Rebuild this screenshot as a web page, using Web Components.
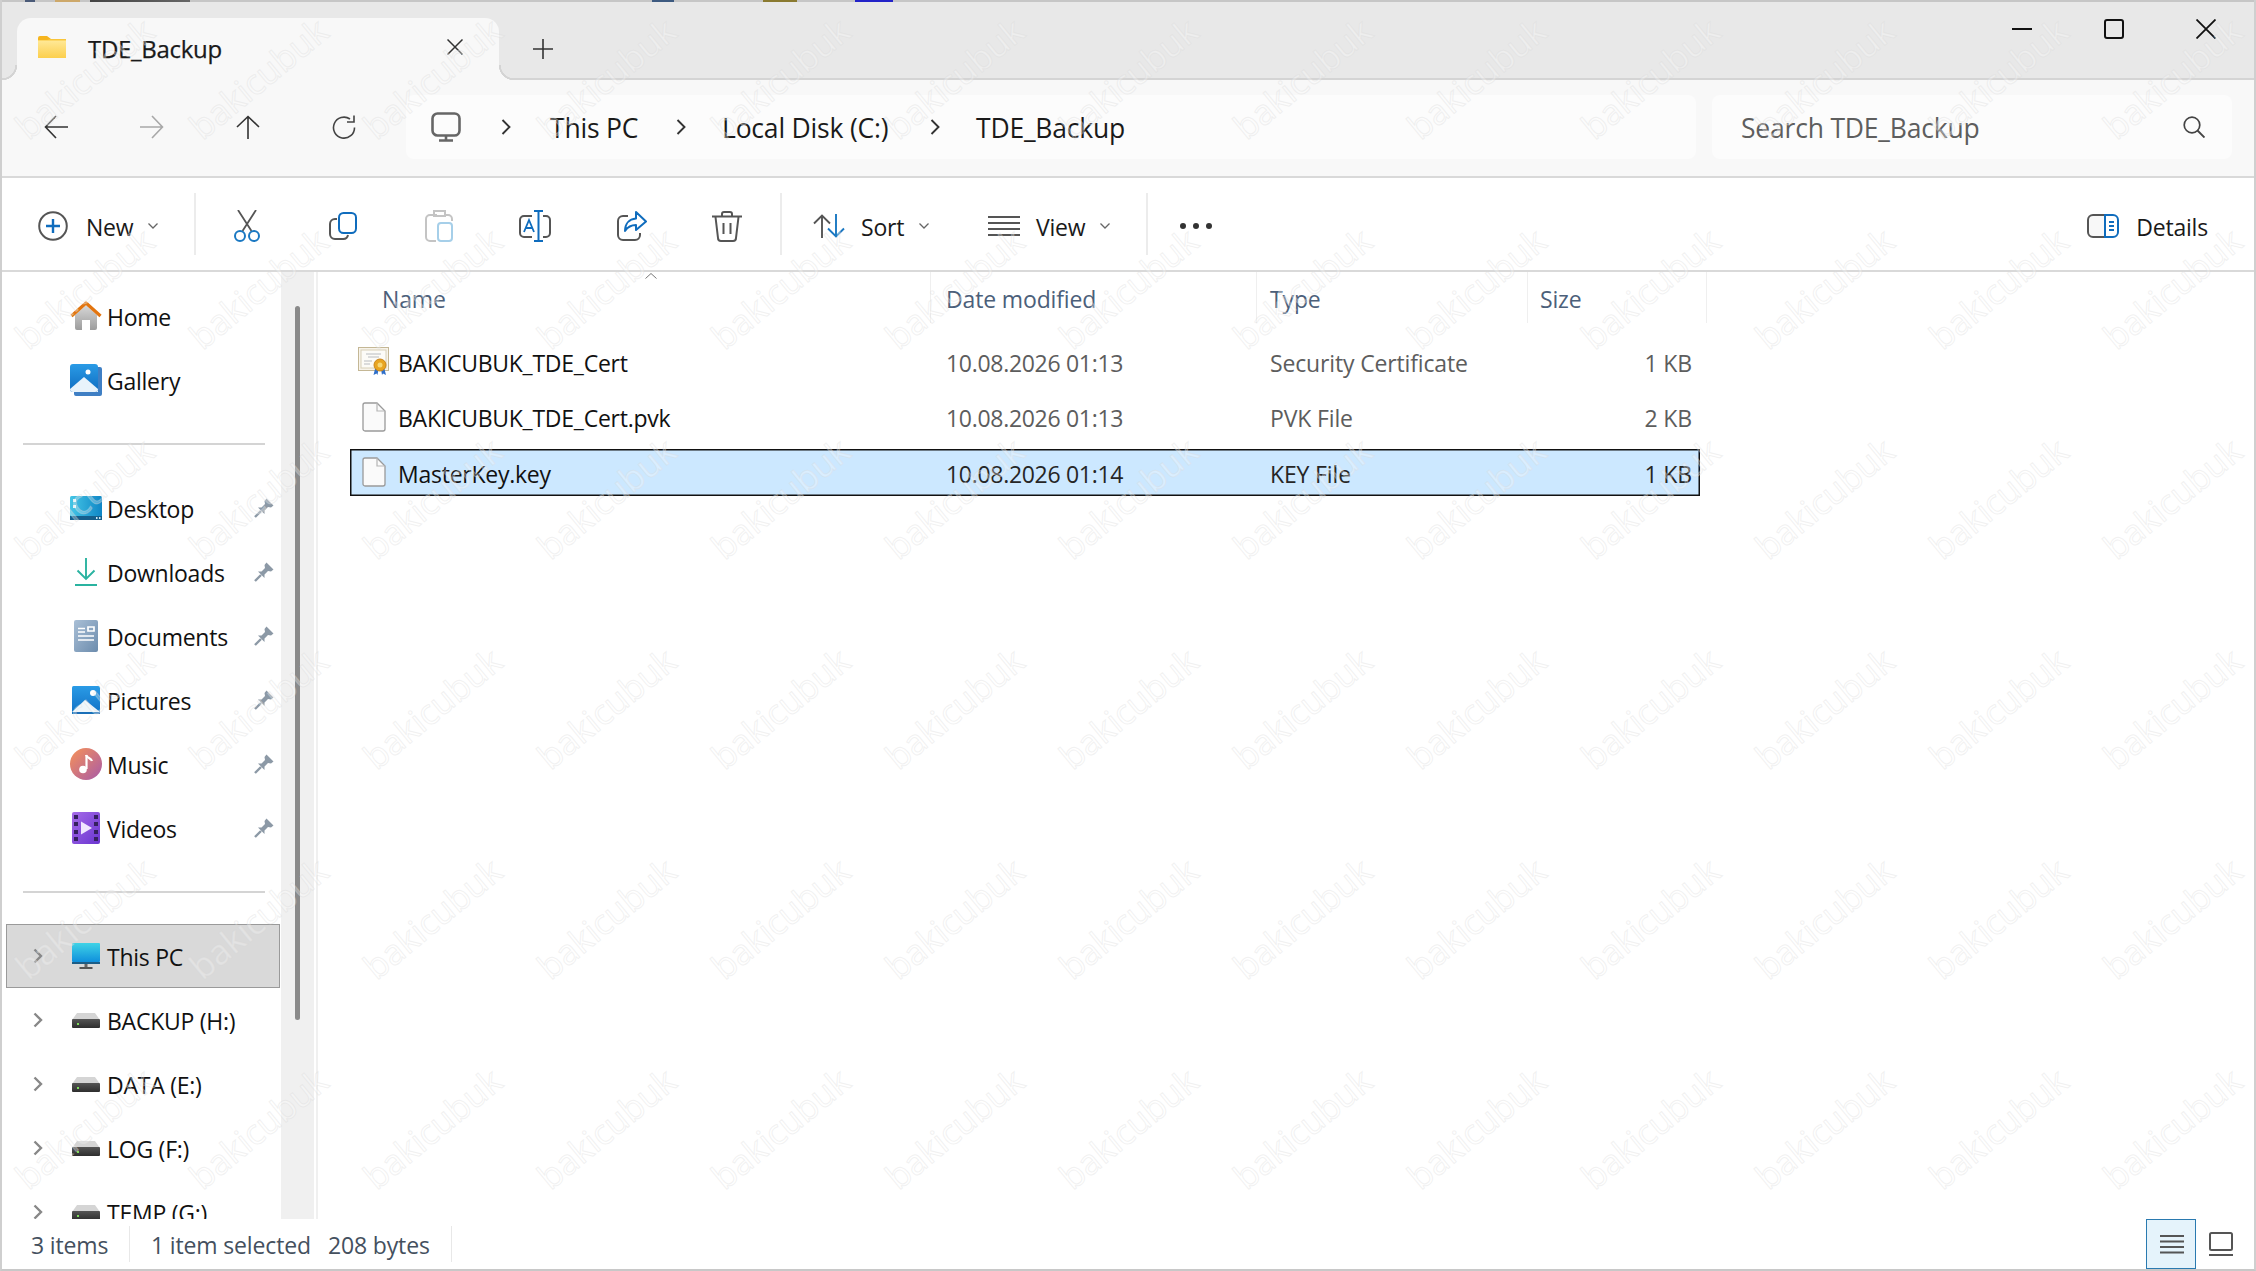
<!DOCTYPE html>
<html lang="en">
<head>
<meta charset="utf-8">
<title>TDE_Backup</title>
<style>
  html, body { margin: 0; padding: 0; background: #fff; }
  body { font-family: "Open Sans", "Noto Sans", sans-serif; color: #111; overflow: hidden; }
</style>
</head>
<body>
<explorer-window>
  <title-bar slot="top" label="TDE_Backup"></title-bar>
  <address-bar slot="top"></address-bar>
  <command-bar slot="top"></command-bar>

  <nav-pane slot="nav">
    <nav-item icon="home">Home</nav-item>
    <nav-item icon="gallery">Gallery</nav-item>
    <nav-sep></nav-sep>
    <nav-item icon="desktop" pinned>Desktop</nav-item>
    <nav-item icon="downloads" pinned>Downloads</nav-item>
    <nav-item icon="documents" pinned>Documents</nav-item>
    <nav-item icon="pictures" pinned>Pictures</nav-item>
    <nav-item icon="music" pinned>Music</nav-item>
    <nav-item icon="videos" pinned>Videos</nav-item>
    <nav-sep></nav-sep>
    <nav-item icon="thispc" expand selected>This PC</nav-item>
    <nav-item icon="drive" expand>BACKUP (H:)</nav-item>
    <nav-item icon="drive" expand>DATA (E:)</nav-item>
    <nav-item icon="drive" expand>LOG (F:)</nav-item>
    <nav-item icon="drive" expand>TEMP (G:)</nav-item>
  </nav-pane>

  <file-list slot="main">
    <file-row icon="cert" name="BAKICUBUK_TDE_Cert" date="10.08.2026 01:13" type="Security Certificate" size="1 KB"></file-row>
    <file-row icon="doc" name="BAKICUBUK_TDE_Cert.pvk" date="10.08.2026 01:13" type="PVK File" size="2 KB"></file-row>
    <file-row icon="doc" name="MasterKey.key" date="10.08.2026 01:14" type="KEY File" size="1 KB" selected></file-row>
  </file-list>

  <status-bar slot="bottom"></status-bar>
  <water-mark slot="over"></water-mark>
</explorer-window>

<script>
const ICONS = {
  folder: [28, 22, `<defs><linearGradient id="g" x1="0" y1="0" x2="0" y2="1"><stop offset="0" stop-color="#ffe999"/><stop offset="1" stop-color="#fccf4d"/></linearGradient></defs>
    <path d="M0 2a2 2 0 0 1 2-2h7l4 3h15v5H0z" fill="#f6b51e"/><rect y="4" width="28" height="18" fill="url(#g)"/><path d="M0 4h9l3-1h16v1.500H0z" fill="#f9c53a"/>`],
  home: [32, 30, `<defs><linearGradient id="g" x1="0" y1="0" x2="0" y2="1"><stop offset="0" stop-color="#d8d8d8"/><stop offset="1" stop-color="#9c9c9c"/></linearGradient></defs>
    <path d="M5 14 16 4l11 10v13a2 2 0 0 1-2 2h-5V19h-8v10H7a2 2 0 0 1-2-2z" fill="url(#g)"/><path d="M1.500 15 16 2l14.500 13" fill="none" stroke="#e2740f" stroke-width="3.200" stroke-linejoin="round"/>`],
  gallery: [32, 32, `<defs><linearGradient id="g" x1="0" y1="0" x2="0" y2="1"><stop offset="0" stop-color="#2a9be6"/><stop offset="1" stop-color="#0f6cc0"/></linearGradient></defs>
    <path d="M28 3h2a2 2 0 0 1 2 2v25a2 2 0 0 1-2 2H6a2 2 0 0 1-2-2v-2h24z" fill="#3f7fc4"/><rect width="28" height="28" rx="3" fill="url(#g)"/>
    <path d="M0 25 14 13l14 12v0a3 3 0 0 1-3 3H3a3 3 0 0 1-3-3z" fill="#e8f3fb"/><circle cx="18" cy="8" r="2.500" fill="#fff"/>`],
  desktop: [32, 24, `<defs><linearGradient id="g" x1="0" y1="0" x2="1" y2="0"><stop offset="0" stop-color="#45c6e6"/><stop offset="1" stop-color="#0f86c6"/></linearGradient></defs>
    <rect width="32" height="24" rx="1.500" fill="url(#g)"/><rect y="20" width="32" height="4" fill="#155f8c"/><rect x="3" y="3" width="3" height="3" fill="#e8f8fc"/><rect x="3" y="9" width="3" height="3" fill="#e8f8fc"/><rect x="26" y="21" width="1.500" height="2" fill="#cfeaf5"/><rect x="29" y="21" width="1.500" height="2" fill="#cfeaf5"/>`],
  downloads: [22, 28, `<path d="M11 0v21M2.500 12.500 11 21l8.500-8.500M0 27h22" fill="none" stroke="#2ab3a0" stroke-width="1.900"/>`],
  documents: [24, 32, `<defs><linearGradient id="g" x1="0" y1="0" x2="1" y2="1"><stop offset="0" stop-color="#a9bfd6"/><stop offset="1" stop-color="#6c8cad"/></linearGradient></defs>
    <rect width="24" height="32" rx="2" fill="url(#g)"/><path d="M4 8.500h7M14 7h6v4h-6zM4 12h7M4 16h16M4 20h16" fill="none" stroke="#fff" stroke-width="1.700"/>`],
  pictures: [28, 28, `<defs><linearGradient id="g" x1="0" y1="0" x2="0" y2="1"><stop offset="0" stop-color="#2a9be6"/><stop offset="1" stop-color="#1170c4"/></linearGradient></defs>
    <rect width="28" height="28" rx="1.500" fill="url(#g)"/><path d="M0 26 13 14l15 12z" fill="#eef6fb"/><circle cx="21" cy="7" r="3" fill="#fff"/><rect y="26" width="28" height="2" fill="#1a6fb8"/>`],
  music: [32, 32, `<defs><linearGradient id="g" x1="0" y1="0" x2="1" y2="1"><stop offset="0" stop-color="#f79257"/><stop offset="1" stop-color="#a85aa8"/></linearGradient></defs>
    <circle cx="16" cy="16" r="16" fill="url(#g)"/><path d="M16.500 7v14" stroke="#fff" stroke-width="2.200"/><path d="M16 7c1 3 5 3 6 6" fill="none" stroke="#fff" stroke-width="2.200"/><circle cx="13" cy="21.500" r="3.800" fill="#fff"/>`],
  videos: [28, 32, `<defs><linearGradient id="g" x1="0" y1="0" x2="1" y2="1"><stop offset="0" stop-color="#a56be8"/><stop offset="1" stop-color="#6a35d0"/></linearGradient></defs>
    <rect width="28" height="32" rx="2" fill="url(#g)"/><g fill="#35205f"><rect x="2" y="3" width="4" height="4"/><rect x="2" y="10" width="4" height="4"/><rect x="2" y="18" width="4" height="4"/><rect x="2" y="25" width="4" height="4"/><rect x="22" y="3" width="4" height="4"/><rect x="22" y="10" width="4" height="4"/><rect x="22" y="18" width="4" height="4"/><rect x="22" y="25" width="4" height="4"/></g><path d="M9 9.500 20 16 9 22.500z" fill="#f0e8ff"/>`],
  thispc: [28, 26, `<defs><linearGradient id="g" x1="0" y1="0" x2="0" y2="1"><stop offset="0" stop-color="#3fd3e6"/><stop offset="1" stop-color="#0f8fdc"/></linearGradient></defs>
    <rect width="28" height="19" rx="1" fill="url(#g)"/><rect y="19" width="28" height="2" fill="#1c5d86"/><rect x="12.500" y="21" width="3" height="3" fill="#666"/><rect x="7.500" y="24" width="13" height="2" fill="#555"/>`],
  drive: [28, 15, `<defs><linearGradient id="g" x1="0" y1="0" x2="0" y2="1"><stop offset="0" stop-color="#555"/><stop offset="1" stop-color="#2e2e2e"/></linearGradient></defs>
    <path d="M0 7 5 0h18l5 7z" fill="#d5d5d5"/><rect y="6" width="28" height="9" rx="1" fill="url(#g)"/><rect x="5" y="10" width="2" height="2" fill="#7cdc5a"/>`],
  pin: [20, 20, `<path d="M12.500.5l7 7L17 9.500 14 9l-3.500 3.500V16L4 9.500h3.500L11 6l-.5-3z" fill="#8c99a6"/><path d="M7 13l-6 6" stroke="#8c99a6" stroke-width="2.400"/>`],
  navchev: [10, 16, `<path d="M1.500 1.500 8 8l-6.500 6.500" fill="none" stroke="#888" stroke-width="2.400"/>`],
  crumb: [10, 16, `<path d="M1.500 1 8.500 8l-7 7" fill="none" stroke="#333" stroke-width="1.900"/>`],
  monitor: [30, 30, `<rect x="1.500" y="1.500" width="27" height="22" rx="5" fill="none" stroke="#666" stroke-width="2.600"/><path d="M15 24v4M8 28.500h14" fill="none" stroke="#666" stroke-width="2.600"/>`],
  back: [24, 24, `<path d="M24 12H1.500M12 1 1.500 12 12 23" fill="none" stroke="#333" stroke-width="1.600"/>`],
  forward: [24, 24, `<path d="M0 12h22.500M12 1l10.500 11L12 23" fill="none" stroke="#a8a8a8" stroke-width="1.600"/>`],
  up: [24, 24, `<path d="M12 24V1.500M1 12 12 1.500 23 12" fill="none" stroke="#333" stroke-width="1.600"/>`],
  refresh: [24, 24, `<path d="M18 4A10.500 10.500 0 1 0 22.500 12.500" fill="none" stroke="#444" stroke-width="1.600"/><path d="M22 .5V7h-7" fill="none" stroke="#444" stroke-width="1.600"/>`],
  search: [22, 22, `<circle cx="9" cy="9" r="7.800" fill="none" stroke="#444" stroke-width="1.700"/><path d="M14.500 14.500l7 7" stroke="#444" stroke-width="1.900"/>`],
  tabx: [16, 16, `<path d="M.5.500l15 15M15.500.500l-15 15" stroke="#333" stroke-width="1.500"/>`],
  plus: [20, 20, `<path d="M10 0v20M0 10h20" stroke="#333" stroke-width="1.600"/>`],
  winmin: [20, 20, `<path d="M0 10h20" stroke="#111" stroke-width="2"/>`],
  winmax: [20, 20, `<rect x="1" y="1" width="18" height="18" rx="2" fill="none" stroke="#111" stroke-width="2"/>`],
  winclose: [20, 20, `<path d="M.5.500l19 19M19.500.500l-19 19" stroke="#111" stroke-width="1.800"/>`],
  new: [30, 30, `<circle cx="15" cy="15" r="13.800" fill="none" stroke="#555" stroke-width="2"/><path d="M15 8v14M8 15h14" stroke="#0f6cbd" stroke-width="2.400"/>`],
  cut: [28, 32, `<path d="M5 0 18.500 21M23 0 9.500 21" stroke="#555" stroke-width="1.800"/><circle cx="7" cy="26" r="5" fill="none" stroke="#1a78c2" stroke-width="2"/><circle cx="21" cy="26" r="5" fill="none" stroke="#1a78c2" stroke-width="2"/>`],
  copy: [28, 28, `<rect x="10" y="1" width="17" height="20" rx="4.500" fill="none" stroke="#0f6cbd" stroke-width="2"/><path d="M8 7H6a5 5 0 0 0-5 5v10a5 5 0 0 0 5 5h8a5 5 0 0 0 5-4" fill="none" stroke="#555" stroke-width="2"/>`],
  paste: [28, 32, `<path d="M12 5H5a4 4 0 0 0-4 4v18a4 4 0 0 0 4 4h6M21 5h2a4 4 0 0 1 4 4v2M9 1h11v5H9z" fill="none" stroke="#c4c4c4" stroke-width="2"/><rect x="13" y="13" width="14" height="18" rx="3" fill="none" stroke="#a6cfe9" stroke-width="2"/>`],
  rename: [32, 32, `<path d="M13 6H5a4 4 0 0 0-4 4v13a4 4 0 0 0 4 4h8M24 6h3a4 4 0 0 1 4 4v13a4 4 0 0 1-4 4h-3" fill="none" stroke="#555" stroke-width="2"/><path d="M15 1h9M19.500 1v30M15 31h9" stroke="#0f6cbd" stroke-width="2"/><path d="M5 22 10 10l5 12M7 18h6" fill="none" stroke="#0f6cbd" stroke-width="1.800"/>`],
  share: [30, 30, `<path d="M11 5H6a5 5 0 0 0-5 5v14a5 5 0 0 0 5 5h12a5 5 0 0 0 5-5v-2" fill="none" stroke="#555" stroke-width="2"/><path d="M19 1l10 9.500L19 19v-5c-5 0-8 1.500-11 6 0-7 4-12 11-12.500z" fill="none" stroke="#0f6cbd" stroke-width="2" stroke-linejoin="round"/>`],
  del: [30, 31, `<path d="M0 5.500h30M10 5V3a2 2 0 0 1 2-2h6a2 2 0 0 1 2 2v2M3.500 6l2.500 21a3 3 0 0 0 3 3h12a3 3 0 0 0 3-3l2.500-21M11.500 12v11M18.500 12v11" fill="none" stroke="#555" stroke-width="2"/>`],
  sort: [32, 24, `<path d="M9 24V1.500M1 9.500l8-8 8 8" fill="none" stroke="#555" stroke-width="1.900"/><path d="M23 0v22.500M15 14.500l8 8 8-8" fill="none" stroke="#1a78c2" stroke-width="1.900"/>`],
  view: [32, 20, `<path d="M0 1h32M0 7h32M0 13h32M0 19h32" stroke="#555" stroke-width="1.800"/>`],
  dots: [32, 6, `<circle cx="3" cy="3" r="3" fill="#333"/><circle cx="16" cy="3" r="3" fill="#333"/><circle cx="29" cy="3" r="3" fill="#333"/>`],
  details: [32, 24, `<path d="M18 1H6a5 5 0 0 0-5 5v12a5 5 0 0 0 5 5h12" fill="#f8f8f8" stroke="#555" stroke-width="2"/><path d="M18 1h8a5 5 0 0 1 5 5v12a5 5 0 0 1-5 5h-8z" fill="none" stroke="#0f6cbd" stroke-width="2"/><path d="M22 8h5M22 12h5M22 16h5" stroke="#0f6cbd" stroke-width="1.800"/>`],
  chevdown: [10, 6, `<path d="M.5.500 5 5l4.500-4.500" fill="none" stroke="#666" stroke-width="1.300"/>`],
  caret: [12, 6, `<path d="M.5 5.500 6 .5l5.500 5" fill="none" stroke="#777" stroke-width="1"/>`],
  cert: [32, 28, `<rect x=".5" y=".5" width="30" height="23" fill="#f7f3ea" stroke="#c4b795"/><rect x="3" y="3" width="25" height="18" fill="#fcfbf7" stroke="#d8d0b8"/><path d="M8 7h15M10 10h11M6 14h8M6 17h6" stroke="#b9bcc0" stroke-width="1"/><path d="M17 22l-1.500 6 3-1.500 1 1.500 1-6M23 22l1 6 1-1.500 3 1.500-1.500-6" fill="#2f6fc9"/><circle cx="22" cy="18" r="6" fill="#e8a522" stroke="#c9851a"/><circle cx="22" cy="18" r="2.500" fill="#f7d774"/>`],
  doc: [24, 30, `<path d="M1 3a2 2 0 0 1 2-2h12l8 8v18a2 2 0 0 1-2 2H3a2 2 0 0 1-2-2z" fill="#fafafa" stroke="#9a9a9a" stroke-width="1.300"/><path d="M15 1v8h8" fill="none" stroke="#b5b5b5" stroke-width="1.200"/>`],
  list: [24, 20, `<path d="M0 2h24M0 7.500h24M0 13h24M0 18.500h24" stroke="#555" stroke-width="2"/>`],
  tile: [24, 24, `<rect x="1" y="1" width="22" height="17" rx="1.500" fill="none" stroke="#555" stroke-width="2"/><path d="M0 23h24" stroke="#555" stroke-width="2"/>`],
};

class UiIcon extends HTMLElement {
  connectedCallback() {
    const [w, h, body] = ICONS[this.getAttribute('name')];
    const root = this.shadowRoot || this.attachShadow({ mode: 'open' });
    root.innerHTML = `<style>:host{display:block;flex:none;width:${w}px;height:${h}px}svg{display:block}</style>
      <svg xmlns="http://www.w3.org/2000/svg" width="${w}" height="${h}" viewBox="0 0 ${w} ${h}">${body}</svg>`;
  }
}

const shell = document.createElement('template');
shell.innerHTML = `
  <style>
    :host { display: flex; flex-direction: column; position: relative; box-sizing: border-box; width: 2256px; height: 1271px; overflow: hidden; background: #fff;
      border-left: 2px solid #cfcfcf; border-right: 2px solid #cfcfcf; border-bottom: 2px solid #c8c8c8; }
    .sliver { flex: none; height: 2px; background: linear-gradient(90deg, #c6c6c6 23px, #4a5a78 23px, #4a5a78 33px, #c6c6c6 33px, #c6c6c6 53px, #cda86a 53px, #cda86a 78px, #c6c6c6 78px, #c6c6c6 88px, #444 88px, #666 188px, #c6c6c6 188px, #c6c6c6 650px, #3d5a80 650px, #3d5a80 672px, #c6c6c6 672px, #c6c6c6 761px, #8a7a30 761px, #8a7a30 795px, #c6c6c6 795px, #c6c6c6 853px, #2323c8 853px, #2323c8 891px, #c6c6c6 891px); }
    .content { display: flex; height: 947px; }
  </style>
  <div class="sliver"></div>
  <slot name="top"></slot>
  <div class="content"><slot name="nav"></slot><slot name="main"></slot></div>
  <slot name="bottom"></slot>
  <slot name="over"></slot>`;
class ExplorerWindow extends HTMLElement {
  constructor() {
    super();
    this.attachShadow({ mode: 'open' }).appendChild(shell.content.cloneNode(true));
  }
}

const titleTpl = document.createElement('template');
titleTpl.innerHTML = `
  <style>
    :host { display: flex; align-items: flex-end; box-sizing: border-box; height: 78px; background: #e8e8e8; border-bottom: 2px solid #d4d4d4; }
    .tab { position: relative; box-sizing: border-box; display: flex; align-items: center; width: 482px; height: 62px; margin: 0 0 -2px 15px; padding: 0 36px 4px 21px;
      background: #f8f8f8; border-radius: 14px 14px 0 0; }
    .tab::before, .tab::after { content: ""; position: absolute; bottom: 0; width: 15px; height: 15px; }
    .tab::before { left: -15px; background: radial-gradient(circle at 0 0, #e8e8e8 13px, #d4d4d4 13.500px, #d4d4d4 15px, #f8f8f8 15.500px); }
    .tab::after { left: 100%; background: radial-gradient(circle at 100% 0, #e8e8e8 13px, #d4d4d4 13.500px, #d4d4d4 15px, #f8f8f8 15.500px); }
    .name { margin-left: 22px; font-size: 24px; letter-spacing: -.3px; color: #1a1a1a; flex: 1; padding-top: 2px; -webkit-text-stroke: .25px #1a1a1a; }
    .plus { margin: 0 0 19px 34px; }
    .controls { display: flex; gap: 72px; margin: 0 38px 0 auto; align-self: flex-start; padding-top: 17px; }
  </style>
  <div class="tab"><ui-icon name="folder"></ui-icon><span class="name"></span><ui-icon name="tabx"></ui-icon></div>
  <ui-icon class="plus" name="plus"></ui-icon>
  <div class="controls"><ui-icon name="winmin"></ui-icon><ui-icon name="winmax"></ui-icon><ui-icon name="winclose"></ui-icon></div>`;
class TitleBar extends HTMLElement {
  constructor() {
    super();
    this.attachShadow({ mode: 'open' }).appendChild(titleTpl.content.cloneNode(true));
  }
  connectedCallback() {
    this.shadowRoot.querySelector('.name').textContent = this.getAttribute('label');
  }
}

const addressTpl = document.createElement('template');
addressTpl.innerHTML = `
  <style>
    :host { display: flex; align-items: center; box-sizing: border-box; height: 98px; padding: 0 0 2px 42px; background: #f8f8f8; border-bottom: 2px solid #d9d9d9; }
    .arrows { display: flex; gap: 72px; margin-right: 50px; }
    .box { display: flex; align-items: center; height: 64px; background: #fcfcfc; border-radius: 8px; box-sizing: border-box; }
    .crumbs { width: 1290px; padding-left: 25px; font-size: 26.500px; letter-spacing: -.2px; color: #1a1a1a; }
    .crumbs span { padding-top: 2px; }
    .search { width: 520px; margin-left: 16px; padding: 0 27px 0 29px; justify-content: space-between; font-size: 26.500px; letter-spacing: -.2px; color: #5e5e5e; }
    .search span { padding-top: 2px; }
  </style>
  <div class="arrows"><ui-icon name="back"></ui-icon><ui-icon name="forward"></ui-icon><ui-icon name="up"></ui-icon><ui-icon name="refresh"></ui-icon></div>
  <div class="box crumbs">
    <ui-icon name="monitor"></ui-icon>
    <ui-icon name="crumb" style="margin:0 39px 0 40px"></ui-icon><span style="width:126px">This PC</span>
    <ui-icon name="crumb" style="margin-right:36px"></ui-icon><span style="width:208px">Local Disk (C:)</span>
    <ui-icon name="crumb" style="margin-right:36px"></ui-icon><span>TDE_Backup</span>
  </div>
  <div class="box search"><span>Search TDE_Backup</span><ui-icon name="search"></ui-icon></div>`;
class AddressBar extends HTMLElement {
  constructor() {
    super();
    this.attachShadow({ mode: 'open' }).appendChild(addressTpl.content.cloneNode(true));
  }
}

const commandTpl = document.createElement('template');
commandTpl.innerHTML = `
  <style>
    :host { display: flex; align-items: center; box-sizing: border-box; height: 94px; padding: 4px 46px 0 0; background: #fff; border-bottom: 2px solid #d9d9d9; font-size: 23px; letter-spacing: -.2px; color: #1a1a1a; }
    .sep { flex: none; width: 2px; height: 62px; margin-top: -4px; background: #ececec; }
    span { flex: none; padding-top: 1px; }
  </style>
  <ui-icon name="new" style="margin-left:36px"></ui-icon>
  <span style="margin-left:18px;width:48px">New</span>
  <ui-icon name="chevdown" style="margin-left:14px"></ui-icon>
  <div class="sep" style="margin-left:36px"></div>
  <ui-icon name="cut" style="margin-left:37px"></ui-icon>
  <ui-icon name="copy" style="margin-left:68px"></ui-icon>
  <ui-icon name="paste" style="margin-left:68px"></ui-icon>
  <ui-icon name="rename" style="margin-left:66px"></ui-icon>
  <ui-icon name="share" style="margin-left:66px"></ui-icon>
  <ui-icon name="del" style="margin-left:65px"></ui-icon>
  <div class="sep" style="margin-left:38px"></div>
  <ui-icon name="sort" style="margin-left:31px"></ui-icon>
  <span style="margin-left:16px;width:44px">Sort</span>
  <ui-icon name="chevdown" style="margin-left:14px"></ui-icon>
  <ui-icon name="view" style="margin-left:59px"></ui-icon>
  <span style="margin-left:16px;width:52px">View</span>
  <ui-icon name="chevdown" style="margin-left:12px"></ui-icon>
  <div class="sep" style="margin-left:36px"></div>
  <ui-icon name="dots" style="margin-left:32px"></ui-icon>
  <ui-icon name="details" style="margin-left:auto"></ui-icon>
  <span style="margin-left:17px">Details</span>`;
class CommandBar extends HTMLElement {
  constructor() {
    super();
    this.attachShadow({ mode: 'open' }).appendChild(commandTpl.content.cloneNode(true));
  }
}

const navTpl = document.createElement('template');
navTpl.innerHTML = `
  <style>
    :host { display: flex; flex: none; width: 316px; height: 947px; box-sizing: border-box; border-right: 2px solid #f0f0f0; }
    .list { width: 279px; height: 100%; overflow: hidden; padding-top: 12px; box-sizing: border-box; flex: none; }
    .track { width: 33px; height: 100%; background: #f0f0f0; flex: none; box-sizing: border-box; padding: 34px 0 0 14px; }
    .thumb { width: 5px; height: 714px; background: #8a8a8a; border-radius: 3px; }
  </style>
  <div class="list"><slot></slot></div>
  <div class="track"><div class="thumb"></div></div>`;
class NavPane extends HTMLElement {
  constructor() {
    super();
    this.attachShadow({ mode: 'open' }).appendChild(navTpl.content.cloneNode(true));
  }
}

const navItemTpl = document.createElement('template');
navItemTpl.innerHTML = `
  <style>
    :host { display: grid; grid-template-columns: 64px 32px 1fr 26px; align-items: center; box-sizing: border-box; width: 274px; height: 64px; margin-left: 4px; font-size: 23px; letter-spacing: -.25px; color: #111; }
    :host([selected]) { background: #d9d9d9; box-shadow: inset 0 0 0 1px #9a9a9a; }
    .chev { padding-left: 27px; }
    .ico { display: flex; justify-content: center; }
    .label { padding: 1px 0 0 5px; white-space: nowrap; }
  </style>
  <div class="chev"></div><div class="ico"></div><div class="label"><slot></slot></div><div class="pin"></div>`;
class NavItem extends HTMLElement {
  constructor() {
    super();
    this.attachShadow({ mode: 'open' }).appendChild(navItemTpl.content.cloneNode(true));
  }
  connectedCallback() {
    const $ = (s) => this.shadowRoot.querySelector(s);
    $('.ico').innerHTML = `<ui-icon name="${this.getAttribute('icon')}"></ui-icon>`;
    if (this.hasAttribute('expand')) $('.chev').innerHTML = '<ui-icon name="navchev"></ui-icon>';
    if (this.hasAttribute('pinned')) $('.pin').innerHTML = '<ui-icon name="pin"></ui-icon>';
  }
}

class NavSep extends HTMLElement {
  constructor() {
    super();
    this.attachShadow({ mode: 'open' }).innerHTML = `<style>
      :host { display: flex; align-items: center; height: 64px; padding-left: 21px; }
      div { width: 242px; height: 2px; background: #d4d4d4; }
    </style><div></div>`;
  }
}

const listTpl = document.createElement('template');
listTpl.innerHTML = `
  <style>
    :host { display: block; flex: 1; position: relative; padding-left: 32px; background: #fff; font-size: 23px; letter-spacing: -.15px; }
    .head { display: grid; grid-template-columns: 581px 326px 271px 179px; height: 51px; color: #4c607a; align-items: center; margin-bottom: 14.500px; }
    .head div { height: 100%; display: flex; align-items: center; box-sizing: border-box; padding-top: 3px; border-right: 1px solid #efefef; }
    .head div:nth-child(1) { padding-left: 32px; }
    .head div:nth-child(2) { padding-left: 15px; }
    .head div:nth-child(3) { padding-left: 13px; }
    .head div:nth-child(4) { padding-left: 12px; }
    .caret { position: absolute; left: 327px; top: 1px; }
    .rows { display: flex; flex-direction: column; gap: 8.500px; }
  </style>
  <div class="head"><div>Name</div><div>Date modified</div><div>Type</div><div>Size</div></div>
  <ui-icon class="caret" name="caret"></ui-icon>
  <div class="rows"><slot></slot></div>`;
class FileList extends HTMLElement {
  constructor() {
    super();
    this.attachShadow({ mode: 'open' }).appendChild(listTpl.content.cloneNode(true));
  }
}

const rowTpl = document.createElement('template');
rowTpl.innerHTML = `
  <style>
    :host { display: grid; grid-template-columns: 581px 326px 271px 172px; align-items: center; width: 1350px; height: 47px; color: #5d5d5d; }
    :host([selected]) { background: #cce8ff; box-shadow: inset 0 0 0 1.500px #111; color: #262626; }
    div { padding-top: 3px; white-space: nowrap; }
    .name { display: flex; align-items: center; color: #111; padding: 0 0 0 8px; }
    .name span { margin-left: 8px; padding-top: 3px; letter-spacing: -.25px; }
    .ico { width: 32px; display: flex; justify-content: center; }
    .date { padding-left: 15px; letter-spacing: -.3px; }
    .type { padding-left: 13px; }
    .size { text-align: right; padding-right: 8px; }
  </style>
  <div class="name"><div class="ico" style="padding:0"></div><span></span></div><div class="date"></div><div class="type"></div><div class="size"></div>`;
class FileRow extends HTMLElement {
  constructor() {
    super();
    this.attachShadow({ mode: 'open' }).appendChild(rowTpl.content.cloneNode(true));
  }
  connectedCallback() {
    const $ = (s) => this.shadowRoot.querySelector(s);
    $('.ico').innerHTML = `<ui-icon name="${this.getAttribute('icon')}"></ui-icon>`;
    $('.name span').textContent = this.getAttribute('name');
    $('.date').textContent = this.getAttribute('date');
    $('.type').textContent = this.getAttribute('type');
    $('.size').textContent = this.getAttribute('size');
  }
}

const statusTpl = document.createElement('template');
statusTpl.innerHTML = `
  <style>
    :host { display: flex; align-items: center; box-sizing: border-box; height: 50px; padding-left: 29px; background: #fff; font-size: 23px; letter-spacing: -.15px; color: #44505e; }
    .sep { width: 1px; height: 36px; background: #e8e8e8; }
    .views { display: flex; align-items: center; margin-left: auto; height: 100%; }
    .on { display: flex; align-items: center; justify-content: center; box-sizing: border-box; width: 50px; height: 50px; background: #e5f3fb; border: 1.500px solid #2a7ab0; }
    .on ui-icon { margin-left: 2px; }
    .tile { margin: 0 21px 0 13px; }
    span { padding-top: 2px; }
  </style>
  <span style="width:98px">3 items</span><div class="sep"></div>
  <span style="margin-left:21px;width:177px">1 item selected</span><span style="width:123px">208 bytes</span><div class="sep"></div>
  <div class="views"><div class="on"><ui-icon name="list"></ui-icon></div><ui-icon class="tile" name="tile"></ui-icon></div>`;
class StatusBar extends HTMLElement {
  constructor() {
    super();
    this.attachShadow({ mode: 'open' }).appendChild(statusTpl.content.cloneNode(true));
  }
}

class WaterMark extends HTMLElement {
  constructor() {
    super();
    const root = this.attachShadow({ mode: 'open' });
    root.innerHTML = `<style>
      :host { position: absolute; left: -2px; top: 0; width: 2256px; height: 1271px; pointer-events: none; overflow: hidden; display: block; }
      span { position: absolute; transform: translate(-50%, -50%) rotate(-39.500deg); font-size: 35px; letter-spacing: -.2px; white-space: nowrap;
        color: rgba(255,255,255,.3); -webkit-text-stroke: 1px rgba(215,215,215,.35); }
    </style>`;
    for (let j = -3; j <= 2; j++) {
      for (let i = -2; i <= 10; i++) {
        const $s = document.createElement('span');
        $s.textContent = 'bakicubuk';
        $s.style.left = (432 + 174 * i) + 'px';
        $s.style.top = (708 + 210 * j) + 'px';
        root.appendChild($s);
      }
    }
  }
}

customElements.define('ui-icon', UiIcon);
customElements.define('explorer-window', ExplorerWindow);
customElements.define('title-bar', TitleBar);
customElements.define('address-bar', AddressBar);
customElements.define('command-bar', CommandBar);
customElements.define('nav-pane', NavPane);
customElements.define('nav-item', NavItem);
customElements.define('nav-sep', NavSep);
customElements.define('file-list', FileList);
customElements.define('file-row', FileRow);
customElements.define('status-bar', StatusBar);
customElements.define('water-mark', WaterMark);
</script>
</body>
</html>
